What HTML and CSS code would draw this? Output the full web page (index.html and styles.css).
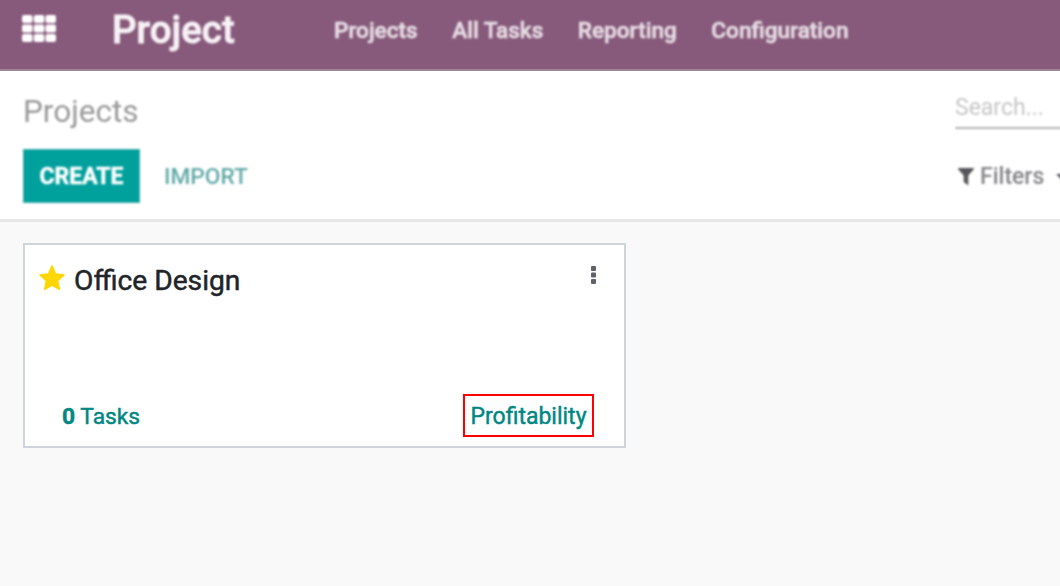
FILE: index.html
```html
<!DOCTYPE html>
<html lang="en">
<head>
<meta charset="utf-8">
<title>Project</title>
<link rel="stylesheet" href="styles.css">
</head>
<body>
<header class="navbar">
  <svg class="apps soft" width="34" height="28" viewBox="0 0 34 28" fill="#fff">
    <rect x="0" y="0" width="10.500" height="8" rx="2"/><rect x="11.800" y="0" width="10.500" height="8" rx="2"/><rect x="23.500" y="0" width="10.500" height="8" rx="2"/>
    <rect x="0" y="9.500" width="10.500" height="8" rx="2"/><rect x="11.800" y="9.500" width="10.500" height="8" rx="2"/><rect x="23.500" y="9.500" width="10.500" height="8" rx="2"/>
    <rect x="0" y="19" width="10.500" height="8" rx="2"/><rect x="11.800" y="19" width="10.500" height="8" rx="2"/><rect x="23.500" y="19" width="10.500" height="8" rx="2"/>
  </svg>
  <span class="brand soft">Project</span>
  <nav class="menu soft">
    <a>Projects</a><a>All Tasks</a><a>Reporting</a><a>Configuration</a>
  </nav>
</header>
<section class="control">
  <div class="left">
    <h1 class="title soft">Projects</h1>
    <div class="buttons"><button class="create soft"><span>CREATE</span></button><span class="import soft">IMPORT</span></div>
  </div>
  <div class="right">
    <div class="search soft">Search...</div>
    <div class="filters soft">
      <svg width="16" height="18" viewBox="0 0 16 18" fill="#55555a"><path d="M.6 0h14.8c.6 0 .8.7.4 1.200L10.300 7.500V17.500L5.700 14V7.500L.2 1.200C-.2.700 0 0 .6 0z"/></svg>
      <span class="filter-label">Filters</span>
      <svg class="caret" width="12" height="6" viewBox="0 0 12 6" fill="#55555a"><path d="M0 0h12L6 6z"/></svg>
    </div>
  </div>
</section>
<main class="kanban">
  <article class="card">
    <div class="card-head">
      <svg class="star" width="26" height="25" viewBox="0 0 26 25" fill="#ffd700"><path d="M13 0Q13.500 0 13.800.700L17 8.200 25.200 9.300Q26.500 9.600 25.500 10.600L19.500 16 21 24Q21.100 25.400 20 24.900L13 21 6 24.900Q4.900 25.400 5 24L6.500 16 .5 10.600Q-.5 9.600.8 9.300L9 8.200 12.200.700Q12.500 0 13 0z"/></svg>
      <h2 class="name">Office Design</h2>
      <svg class="dots" width="5" height="19" viewBox="0 0 5 19" fill="#5f6368"><rect width="5" height="5" rx="1"/><rect y="6.500" width="5" height="5" rx="1"/><rect y="13" width="5" height="5" rx="1"/></svg>
    </div>
    <div class="card-foot">
      <a class="tasks"><b>0</b> Tasks</a>
      <a class="profit">Profitability</a>
    </div>
  </article>
</main>
</body>
</html>
```
FILE: styles.css
```css
* { box-sizing: border-box; }
body { margin: 0; width: 1060px; height: 586px; overflow: hidden; background: #f9f9f9; font-family: Roboto, "Liberation Sans", sans-serif; }
.soft { filter: blur(1.3px); }
.navbar { height: 71px; display: flex; align-items: flex-start; background: #875a7b; border-bottom: 2px solid #9c8597; white-space: nowrap; }
.apps { margin: 15px 0 0 22px; flex: none; overflow: visible; }
.brand { margin: 6px 0 0 56px; width: 222px; font-size: 38.500px; line-height: 48px; font-weight: 500; color: #f7f2f6; -webkit-text-stroke: .9px #f7f2f6; }
.menu { display: flex; gap: 34.500px; margin-top: 16px; font-size: 22.600px; line-height: 30px; font-weight: 500; color: #e6dce4; -webkit-text-stroke: .6px #e6dce4; }
.control { height: 151px; display: flex; justify-content: space-between; background: #fff; border-bottom: 3px solid #e7e7e7; }
.left { padding: 21px 0 0 23px; }
.title { margin: 0; font-size: 31.500px; line-height: 40px; font-weight: 400; color: #999; }
.buttons { display: flex; align-items: center; gap: 24px; margin-top: 17px; }
.create { width: 117px; height: 54px; padding: 2px 0 0; border: 1px solid #3fb0ac; background: #00a09d; color: #fff; font: 700 23px/30px Roboto, sans-serif; -webkit-text-stroke: .4px #fff; }
.import { font-size: 22.700px; font-weight: 500; color: #62aaa7; }
.right { width: 105px; padding-top: 20px; overflow: hidden; white-space: nowrap; }
.search { height: 38px; width: 125px; border-bottom: 2px solid #b5b5b5; font-size: 23px; line-height: 34px; color: #c6c6c6; }
.filters { display: flex; align-items: center; width: 125px; margin-top: 33px; padding-left: 3px; font-size: 23px; line-height: 30px; font-weight: 500; color: #858588; }
.filter-label { margin-left: 6px; }
.caret { margin-left: 12px; }
.kanban { padding: 21px 23px; }
.card { width: 603px; height: 205px; display: flex; flex-direction: column; justify-content: space-between; background: #fff; border: 2px solid #ced4da; }
.card-head { display: flex; align-items: flex-start; padding: 17px 28px 0 14px; }
.star { margin: 3px 0 0 -.5px; }
.name { margin: 0 auto 0 9.500px; font-size: 28.200px; line-height: 37px; font-weight: 400; color: #212529; -webkit-text-stroke: .5px #212529; }
.dots { margin-top: 4px; }
.card-foot { display: flex; justify-content: space-between; align-items: center; padding: 0 30px 9px 37px; font-size: 23px; font-weight: 400; color: #008784; -webkit-text-stroke: .45px #008784; }
.tasks { padding-top: 2px; font-size: 22.800px; }
.profit { height: 43px; width: 131px; text-align: center; border: 2px solid #f00; line-height: 41px; }
```
